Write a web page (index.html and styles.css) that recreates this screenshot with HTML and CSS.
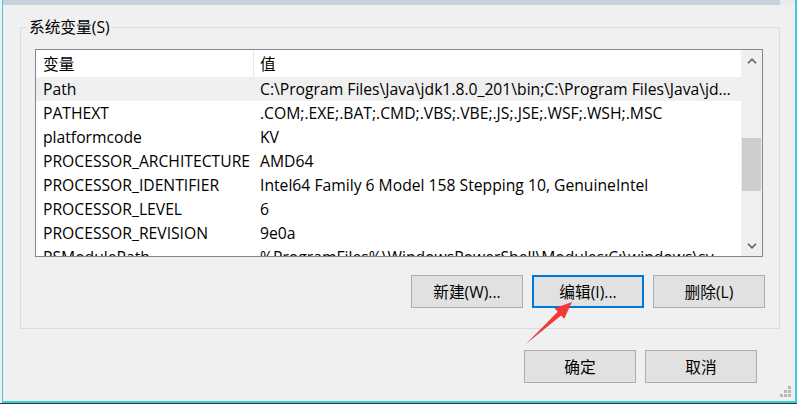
FILE: index.html
```html
<!DOCTYPE html>
<html lang="zh-CN">
<head>
<meta charset="utf-8">
<title>系统变量</title>
<link rel="stylesheet" href="styles.css">
</head>
<body>
<div class="window">
  <div class="strip"><div class="strip-main"></div></div>
  <div class="group">
    <span class="legend">系统变量(S)</span>
    <div class="list">
      <div class="list-main">
        <div class="row header"><div class="c1">变量</div><div class="c2 hdiv">值</div></div>
        <div class="row sel"><div class="c1">Path</div><div class="c2">C:\Program Files\Java\jdk1.8.0_201\bin;C:\Program Files\Java\jdk1.8.0_201\jre\bin;C:\windows\system32</div></div>
        <div class="row"><div class="c1">PATHEXT</div><div class="c2">.COM;.EXE;.BAT;.CMD;.VBS;.VBE;.JS;.JSE;.WSF;.WSH;.MSC</div></div>
        <div class="row"><div class="c1">platformcode</div><div class="c2">KV</div></div>
        <div class="row"><div class="c1">PROCESSOR_ARCHITECTURE</div><div class="c2">AMD64</div></div>
        <div class="row"><div class="c1">PROCESSOR_IDENTIFIER</div><div class="c2">Intel64 Family 6 Model 158 Stepping 10, GenuineIntel</div></div>
        <div class="row"><div class="c1">PROCESSOR_LEVEL</div><div class="c2">6</div></div>
        <div class="row"><div class="c1">PROCESSOR_REVISION</div><div class="c2">9e0a</div></div>
        <div class="row"><div class="c1">PSModulePath</div><div class="c2">%ProgramFiles%\WindowsPowerShell\Modules;C:\windows\system32\WindowsPowerShell\v1.0\Modules</div></div>
      </div>
      <div class="scrollbar">
        <div class="sb-btn"><svg width="10" height="6" viewBox="0 0 10 6"><path d="M1 5.2 L5 1.2 L9 5.2" fill="none" stroke="#606060" stroke-width="1.6"/></svg></div>
        <div class="sb-track"><div class="thumb"></div></div>
        <div class="sb-btn"><svg width="10" height="6" viewBox="0 0 10 6"><path d="M1 0.8 L5 4.8 L9 0.8" fill="none" stroke="#606060" stroke-width="1.6"/></svg></div>
      </div>
    </div>
    <div class="btns">
      <button class="btn">新建(W)...</button>
      <button class="btn focus">编辑(I)...</button>
      <button class="btn">删除(L)</button>
    </div>
  </div>
  <div class="footer">
    <button class="btn">确定</button>
    <button class="btn">取消</button>
  </div>
  <svg class="grip" width="12" height="12" viewBox="0 0 12 12">
    <rect x="8" y="0" width="3" height="3" fill="#b8b8b8"/>
    <rect x="4" y="4" width="3" height="3" fill="#b8b8b8"/>
    <rect x="8" y="4" width="3" height="3" fill="#b8b8b8"/>
    <rect x="0" y="8" width="3" height="3" fill="#b8b8b8"/>
    <rect x="4" y="8" width="3" height="3" fill="#b8b8b8"/>
    <rect x="8" y="8" width="3" height="3" fill="#b8b8b8"/>
  </svg>
</div>
<div class="under"></div>
<svg class="arrow" width="797" height="404" viewBox="0 0 797 404">
  <polygon points="526,344 557.7,311.7 554.6,308.3 572,302 564.2,318.7 561.1,315.4" fill="#f03a3a"/>
</svg>
</body>
</html>
```
FILE: styles.css
```css
html, body {
  margin: 0;
  padding: 0;
}
body {
  width: 797px;
  height: 404px;
  overflow: hidden;
  background: #f0f0f0;
  font-family: "Open Sans", "Noto Sans CJK SC", sans-serif;
  font-size: 15.7px;
  color: #000;
  position: relative;
}
.window {
  margin-left: 2px;
  width: 792px;
  height: 401px;
  border-left: 1px solid #3ccdd6;
  border-right: 2px solid #3ccdd6;
  border-bottom: 2px solid #3ccdd6;
  background: #f0f0f0;
  position: relative;
}
.strip {
  height: 5px;
  display: flex;
  background: #ebebeb;
}
.strip-main {
  width: 777px;
  background: #c8d1e0;
}
.group {
  margin: 22px 0 0 17px;
  width: 758px;
  height: 300px;
  border: 1px solid #dcdcdc;
  position: relative;
  display: flex;
  flex-direction: column;
}
.legend {
  position: absolute;
  top: -11px;
  left: 5px;
  padding: 0 3px;
  background: #f0f0f0;
  line-height: 20px;
}
.list {
  margin: 21px 0 0 14px;
  width: 726px;
  height: 206px;
  border: 1px solid #828790;
  background: #fff;
  display: flex;
  overflow: hidden;
}
.list-main {
  width: 705px;
  overflow: hidden;
}
.row {
  display: flex;
  height: 24px;
  line-height: 24px;
  white-space: nowrap;
}
.row.sel {
  background: #efefef;
}
.row.header {
  height: 27px;
  line-height: 28px;
}
.c1 {
  width: 210px;
  padding-left: 7px;
  flex: none;
  overflow: hidden;
}
.c2 {
  flex: 1;
  padding-left: 7px;
  padding-right: 9px;
  overflow: hidden;
  text-overflow: ellipsis;
}
.hdiv {
  border-left: 1px solid #e5e5e5;
  padding-left: 6px;
}
.scrollbar {
  width: 21px;
  flex: none;
  background: #f0f0f0;
  display: flex;
  flex-direction: column;
}
.sb-btn {
  height: 21px;
  display: flex;
  align-items: center;
  justify-content: center;
  flex: none;
}
.sb-btn svg {
  display: block;
  margin-left: 1px;
}
.sb-track {
  flex: 1;
}
.thumb {
  margin: 67px 1px 0 1px;
  height: 53px;
  background: #cdcdcd;
}
.btns {
  margin-top: 18px;
  padding-right: 14px;
  display: flex;
  justify-content: flex-end;
  gap: 9px;
}
.btn {
  width: 112px;
  height: 33px;
  border: 1px solid #adadad;
  background: #e1e1e1;
  font-family: "Open Sans", "Noto Sans CJK SC", sans-serif;
  font-size: 15.7px;
  color: #000;
  padding: 0;
  margin: 0;
}
.btn.focus {
  border: 2px solid #0078d7;
}
.footer {
  margin-top: 21px;
  padding-right: 38px;
  display: flex;
  justify-content: flex-end;
  gap: 9px;
}
.grip {
  position: absolute;
  right: 3px;
  bottom: 3px;
}
.under {
  height: 1px;
  background: #2a3a36;
}
.arrow {
  position: absolute;
  left: 0;
  top: 0;
  pointer-events: none;
}
```
